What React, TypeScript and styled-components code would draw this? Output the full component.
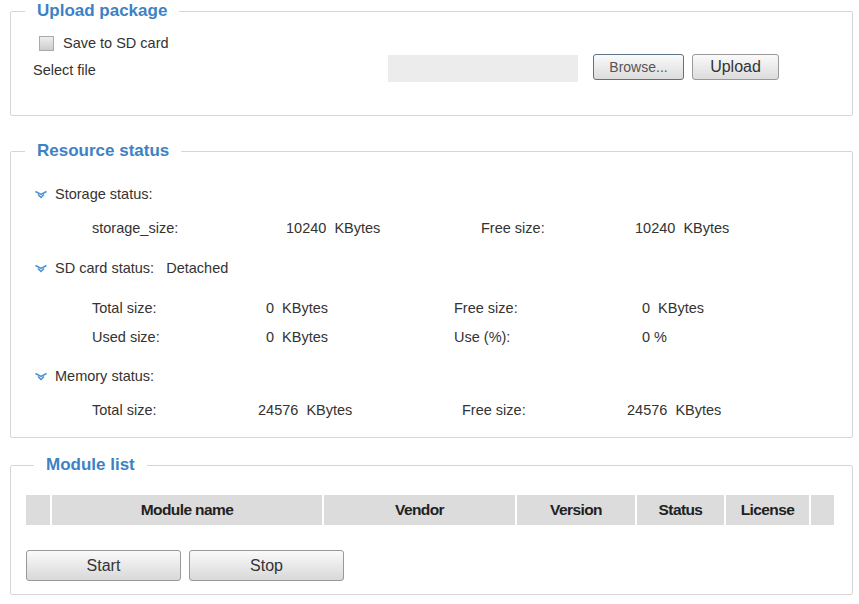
import React from "react";
import styled, { createGlobalStyle } from "styled-components";

const Global = createGlobalStyle`
  body { margin: 0; background: #fff; font-family: "Liberation Sans", Arial, sans-serif; color: #333; font-size: 14.5px; }
`;

const Page = styled.div`
  padding: 0 6px 0 10px;
  display: flex;
  flex-direction: column;
`;

const Box = styled.fieldset<{ $mt: number; $h: number; $legendLeft: number }>`
  margin: ${p => p.$mt}px 0 0 0;
  height: ${p => p.$h}px;
  box-sizing: border-box;
  border: 1px solid #d6d6d6;
  border-radius: 2px;
  padding: 0 0 0 ${p => p.$legendLeft}px;
`;

const Legend = styled.legend`
  color: #3d82c4;
  font-weight: bold;
  font-size: 17px;
  padding: 0 12px;
  margin-left: 0;
`;

const Inner = styled.div<{ $pl: number }>`
  margin-left: ${p => -p.$pl}px;
  display: flex;
  flex-direction: column;
`;

const CheckRow = styled.label`
  display: flex;
  align-items: center;
  gap: 9px;
  padding-left: 28px;
  margin-top: 12px;
  height: 20px;
`;

const Check = styled.span`
  width: 15px;
  height: 15px;
  border: 1px solid #aaa;
  background: linear-gradient(#eee, #ccc);
  box-sizing: border-box;
`;

const FileRow = styled.div`
  display: flex;
  align-items: flex-start;
  padding-left: 22px;
  margin-top: 0px;
`;

const FileLabel = styled.span`
  width: 355px;
  margin-top: 9px;
`;

const FileInput = styled.div`
  width: 190px;
  height: 27px;
  background: #ececec;
  margin-right: 15px;
  margin-top: 2px;
`;

const SmallBtn = styled.button<{ $w: number; $blue?: boolean }>`
  width: ${p => p.$w}px;
  height: 26px;
  margin-right: 8px;
  margin-top: 1px;
  font-family: "Liberation Sans", Arial, sans-serif;
  font-size: ${p => (p.$blue ? 14 : 16)}px;
  color: ${p => (p.$blue ? "#555" : "#333")};
  border: 1px solid ${p => (p.$blue ? "#5a7389" : "#999")};
  border-radius: 3px;
  background: linear-gradient(#fafafa, #dcdcdc);
  padding: 0;
`;

const Section = styled.div<{ $mt: number }>`
  display: flex;
  align-items: center;
  gap: 7px;
  padding-left: 23px;
  margin-top: ${p => p.$mt}px;
  height: 20px;
`;

const Chev = () => (
  <svg width="14" height="9" viewBox="0 0 14 9">
    <path d="M1.5 1.5 L7 4.5 L12.5 1.5" stroke="#4a8fd0" strokeWidth="1.5" fill="none" />
    <path d="M4 4.5 L7 7.5 L10 4.5" stroke="#4a8fd0" strokeWidth="1.5" fill="none" />
  </svg>
);

const Row = styled.div<{ $cols: string; $mt: number }>`
  display: grid;
  grid-template-columns: ${p => p.$cols};
  margin-top: ${p => p.$mt}px;
  height: 20px;
  align-items: center;
`;

const Table = styled.div`
  display: grid;
  grid-template-columns: 24px 270px 191px 118px 87px 83px 23px;
  column-gap: 2px;
  margin: 20px 0 0 15px;
  height: 30px;
`;

const Th = styled.div`
  background: #dcdcdc;
  font-weight: bold;
  font-size: 15.5px;
  color: #222;
  display: flex;
  align-items: center;
  justify-content: center;
  letter-spacing: -0.6px;
`;

const BtnRow = styled.div`
  display: flex;
  gap: 8px;
  margin: 25px 0 0 15px;
`;

const BigBtn = styled.button`
  width: 155px;
  height: 31px;
  font-family: "Liberation Sans", Arial, sans-serif;
  font-size: 16px;
  color: #333;
  border: 1px solid #999;
  border-radius: 3px;
  background: linear-gradient(#fafafa, #d8d8d8);
`;

export default function App() {
  return (
    <Page>
      <Global />
      <Box $mt={1} $h={115} $legendLeft={14}>
        <Legend>Upload package</Legend>
        <Inner $pl={14}>
          <CheckRow><Check />Save to SD card</CheckRow>
          <FileRow>
            <FileLabel>Select file</FileLabel>
            <FileInput />
            <SmallBtn $w={91} $blue>Browse...</SmallBtn>
            <SmallBtn $w={87}>Upload</SmallBtn>
          </FileRow>
        </Inner>
      </Box>

      <Box $mt={25} $h={297} $legendLeft={14}>
        <Legend>Resource status</Legend>
        <Inner $pl={14}>
          <Section $mt={23}><Chev />Storage status:</Section>
          <Row $cols="81px 194px 195px 154px 1fr" $mt={14}>
            <span /><span>storage_size:</span><span>10240&nbsp; KBytes</span><span>Free size:</span><span>10240&nbsp; KBytes</span>
          </Row>
          <Section $mt={20}><Chev />SD card status:&nbsp;&nbsp; Detached</Section>
          <Row $cols="81px 174px 188px 188px 1fr" $mt={20}>
            <span /><span>Total size:</span><span>0&nbsp; KBytes</span><span>Free size:</span><span>0&nbsp; KBytes</span>
          </Row>
          <Row $cols="81px 174px 188px 188px 1fr" $mt={9}>
            <span /><span>Used size:</span><span>0&nbsp; KBytes</span><span>Use (%):</span><span>0 %</span>
          </Row>
          <Section $mt={19}><Chev />Memory status:</Section>
          <Row $cols="81px 166px 204px 165px 1fr" $mt={14}>
            <span /><span>Total size:</span><span>24576&nbsp; KBytes</span><span>Free size:</span><span>24576&nbsp; KBytes</span>
          </Row>
        </Inner>
      </Box>

      <Box $mt={17} $h={140} $legendLeft={23}>
        <Legend>Module list</Legend>
        <Inner $pl={23}>
          <Table>
            <Th /><Th>Module name</Th><Th>Vendor</Th><Th>Version</Th><Th>Status</Th><Th>License</Th><Th />
          </Table>
          <BtnRow>
            <BigBtn>Start</BigBtn>
            <BigBtn>Stop</BigBtn>
          </BtnRow>
        </Inner>
      </Box>
    </Page>
  );
}
